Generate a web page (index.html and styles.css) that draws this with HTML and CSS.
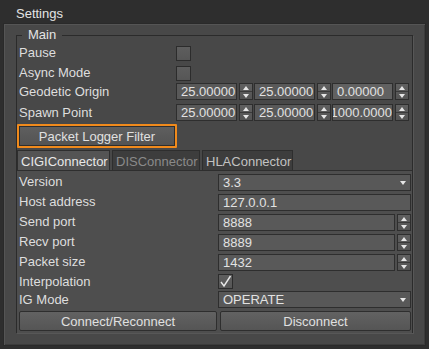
FILE: index.html
```html
<!DOCTYPE html>
<html>
<head>
<meta charset="utf-8">
<link rel="stylesheet" href="styles.css">
</head>
<body>
<div class="title">Settings</div>
<div class="panel">
  <fieldset class="group">
    <legend>Main</legend>
    <div class="row h20"><span class="lbl">Pause</span><span class="cb"></span></div>
    <div class="row h20"><span class="lbl">Async Mode</span><span class="cb"></span></div>
    <div class="row h21"><span class="lbl">Geodetic Origin</span>
      <div class="spins">
        <div class="spin"><span class="field">25.00000</span><span class="arrows"><i class="up"></i><i class="dn"></i></span></div>
        <div class="spin"><span class="field">25.00000</span><span class="arrows"><i class="up"></i><i class="dn"></i></span></div>
        <div class="spin"><span class="field hover">0.00000</span><span class="arrows"><i class="up"></i><i class="dn"></i></span></div>
      </div>
    </div>
    <div class="row h21"><span class="lbl">Spawn Point</span>
      <div class="spins">
        <div class="spin"><span class="field">25.00000</span><span class="arrows"><i class="up"></i><i class="dn"></i></span></div>
        <div class="spin"><span class="field">25.00000</span><span class="arrows"><i class="up"></i><i class="dn"></i></span></div>
        <div class="spin"><span class="field clip"><span>1000.0000</span></span><span class="arrows"><i class="up"></i><i class="dn"></i></span></div>
      </div>
    </div>
    <div class="btnrow"><button class="btn focus">Packet Logger Filter</button></div>
    <div class="tabs">
      <span class="tab active">CIGIConnector</span>
      <span class="tab disabled">DISConnector</span>
      <span class="tab last">HLAConnector</span>
    </div>
    <div class="pane">
      <div class="prow"><span class="lbl">Version</span><span class="field combo">3.3<i class="drop"></i></span></div>
      <div class="prow"><span class="lbl">Host address</span><span class="field wide">127.0.0.1</span></div>
      <div class="prow"><span class="lbl">Send port</span><span class="pspin"><span class="field">8888</span><span class="arrows"><i class="up"></i><i class="dn"></i></span></span></div>
      <div class="prow"><span class="lbl">Recv port</span><span class="pspin"><span class="field">8889</span><span class="arrows"><i class="up"></i><i class="dn"></i></span></span></div>
      <div class="prow"><span class="lbl">Packet size</span><span class="pspin"><span class="field">1432</span><span class="arrows"><i class="up"></i><i class="dn"></i></span></span></div>
      <div class="prow short"><span class="lbl">Interpolation</span><span class="cb checked"><svg width="15" height="15" viewBox="0 0 15 15"><path d="M3 8 L6 12 L12.5 2" fill="none" stroke="#e8e8e8" stroke-width="1.4"/></svg></span></div>
      <div class="prow igrow"><span class="lbl">IG Mode</span><span class="field combo">OPERATE<i class="drop"></i></span></div>
      <div class="brow">
        <button class="btn">Connect/Reconnect</button>
        <button class="btn">Disconnect</button>
      </div>
    </div>
  </fieldset>
</div>
</body>
</html>
```
FILE: styles.css
```css
html, body {
  margin: 0;
  padding: 0;
  background: #2e2e2e;
  width: 429px;
  height: 349px;
  overflow: hidden;
  font-family: "Liberation Sans", Arial, sans-serif;
  font-size: 13px;
  color: #dedede;
}
.title {
  box-sizing: border-box;
  height: 23px;
  padding: 6px 0 0 16px;
  line-height: 16px;
  color: #e4e4e4;
}
.panel {
  box-sizing: border-box;
  margin-left: 3px;
  width: 423px;
  height: 323px;
  border: 1px solid #2a2a2a;
  box-shadow: inset 1px 1px 0 #555, inset -1px -1px 0 #3c3c3c;
  background: #484848;
  padding: 4px 11px 0 12px;
}
.group {
  margin: 0;
  padding: 1px 0 0 0;
  width: 397px;
  height: 305px;
  box-sizing: border-box;
  border: 1px solid #2b2b2b;
  box-shadow: 1px 1px 0 #575757;
  display: block;
}
.group legend {
  margin-left: 5px;
  padding: 0 6px;
  line-height: 14px;
  color: #e4e4e4;
}
.row {
  display: flex;
  align-items: flex-start;
}
.row.h20 { height: 19.5px; }
.row.h21 { height: 21px; }
.row .cb { margin-top: 3px; }
.row .spins { margin-top: 1px; }
.lbl {
  padding-left: 2px;
  width: 157px;
  flex: none;
  line-height: 20px;
  white-space: nowrap;
}
.cb {
  box-sizing: border-box;
  width: 15px;
  height: 15px;
  border: 1px solid #2c2c2c;
  background: linear-gradient(#5e5e5e, #565656);
  display: block;
  flex: none;
}
.cb svg { display: block; margin: -1px 0 0 -1px; }
.spins {
  display: flex;
  gap: 1px;
}
.spin {
  display: flex;
  gap: 2px;
  align-items: stretch;
}
.field {
  box-sizing: border-box;
  height: 17px;
  border: 1px solid #2e2e2e;
  background: #595959;
  padding-left: 4px;
  line-height: 15px;
  color: #e2e2e2;
  overflow: hidden;
  white-space: nowrap;
  display: block;
}
.spin .field { width: 61px; }
.field.hover { background: #616161; }
.field.clip {
  padding-left: 0;
  display: flex;
  justify-content: flex-end;
}
.field.clip span { flex: none; padding-right: 0; }
.arrows {
  box-sizing: border-box;
  width: 14px;
  height: 17px;
  border: 1px solid #2e2e2e;
  background: linear-gradient(#606060, #545454);
  display: flex;
  flex-direction: column;
}
.arrows i {
  flex: 1;
  position: relative;
}
.arrows i.up { border-bottom: 1px solid #3a3a3a; }
.arrows i::after {
  content: "";
  position: absolute;
  left: 3px;
  width: 0;
  height: 0;
  border-left: 3.5px solid transparent;
  border-right: 3.5px solid transparent;
}
.arrows i.up::after { top: 2px; border-bottom: 4px solid #e6e6e6; }
.arrows i.dn::after { top: 2px; border-top: 4px solid #e6e6e6; }
.btnrow {
  height: 26px;
}
.btn {
  box-sizing: border-box;
  font-family: inherit;
  font-size: 13px;
  color: #e0e0e0;
  border: 1px solid #2e2e2e;
  border-radius: 2px;
  background: linear-gradient(#626262, #555555);
  padding: 0;
  margin: 0;
  line-height: 17px;
}
.btn.focus {
  width: 160px;
  height: 24px;
  border: 2px solid #f08a1c;
  border-radius: 1px;
  box-shadow: inset 0 0 0 1px #2e2e2e;
  background: linear-gradient(#5f5f5f, #535353);
}
.tabs {
  display: flex;
  gap: 2px;
  height: 20px;
}
.tab {
  box-sizing: border-box;
  flex: none;
  height: 20px;
  padding: 0 0 0 3px;
  line-height: 21px;
  background: #3d3d3d;
  color: #c2c2c2;
  border: 1px solid #2e2e2e;
  border-bottom: none;
  font-size: 13px;
  overflow: hidden;
  white-space: nowrap;
}
.tab.active {
  background: #545454;
  color: #e8e8e8;
  width: 93px;
}
.tab.disabled { color: #8a8a8a; width: 88px; }
.tab.last { width: 91px; }
.pane {
  box-sizing: border-box;
  border-top: 1px solid #2e2e2e;
  background: #4e4e4e;
  height: 163px;
  padding-top: 1px;
}
.prow {
  display: grid;
  grid-template-columns: 201px 193px;
  align-items: center;
  height: 20px;
}
.prow.short { height: 18px; align-items: start; }
.prow.short .cb { margin-top: 2px; }
.prow.igrow { align-items: start; }
.prow.igrow .field { margin-top: 1px; }
.prow .lbl { width: auto; }
.combo {
  position: relative;
  background: #585858;
}
.drop {
  position: absolute;
  right: 4px;
  top: 6px;
  width: 0;
  height: 0;
  border-left: 3.5px solid transparent;
  border-right: 3.5px solid transparent;
  border-top: 4px solid #e6e6e6;
}
.pspin {
  display: flex;
  gap: 2px;
}
.pspin .field { width: 177px; }
.brow {
  display: grid;
  grid-template-columns: 198px 191px;
  gap: 3px;
  padding: 1px 0 0 2px;
  height: 21px;
  box-sizing: border-box;
}
.brow .btn { height: 20px; }
```
